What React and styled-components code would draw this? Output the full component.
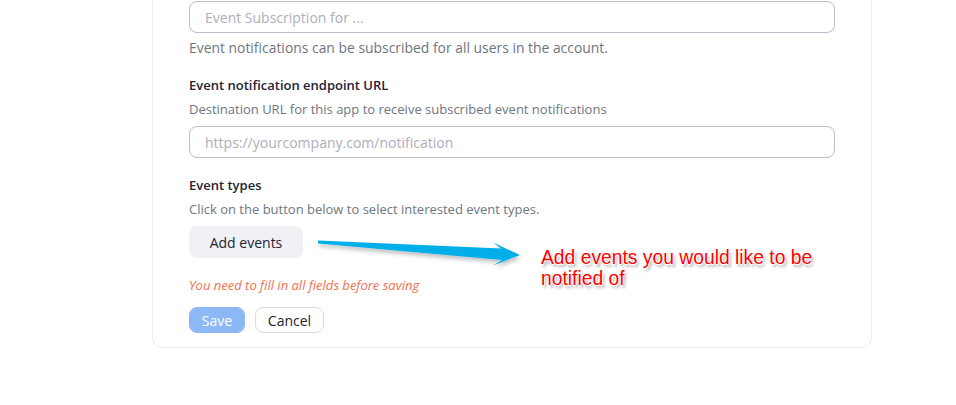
import React from 'react';
import styled, { createGlobalStyle } from 'styled-components';

const GlobalStyle = createGlobalStyle`
  html, body {
    margin: 0;
    padding: 0;
    background: #ffffff;
  }

  body {
    font-family: 'Open Sans', 'Noto Sans', sans-serif;
    color: #232333;
  }
`;

const Page = styled.div`
  position: relative;
  width: 956px;
  height: 405px;
  overflow: hidden;
`;

const Card = styled.section`
  margin-left: 152px;
  width: 720px;
  box-sizing: border-box;
  padding: 1px 36px 14px;
  border: 1px solid #ededf1;
  border-top: none;
  border-radius: 0 0 10px 10px;
  display: flex;
  flex-direction: column;
`;

const Field = styled.div`
  display: flex;
  flex-direction: column;
  margin-top: ${({ $gap }) => $gap || 0}px;
`;

const Label = styled.div`
  font-size: 13px;
  line-height: 20px;
  font-weight: 600;
  color: #232333;
`;

const Help = styled.div`
  font-size: ${({ $size }) => $size || 13}px;
  line-height: 20px;
  color: #6e7680;
  margin-top: ${({ $gap }) => $gap || 0}px;
`;

const TextInput = styled.input`
  box-sizing: border-box;
  width: 100%;
  height: 32px;
  margin-top: ${({ $gap }) => $gap || 0}px;
  padding: 0 15px;
  border: 1px solid #bcbacd;
  border-radius: 8px;
  font-family: 'Open Sans', 'Noto Sans', sans-serif;
  font-size: 14px;
  color: #232333;
  outline: none;

  &::placeholder {
    color: #aeaebb;
  }
`;

const GreyButton = styled.button`
  align-self: flex-start;
  box-sizing: border-box;
  width: 114px;
  height: 32px;
  margin-top: 7px;
  border: none;
  border-radius: 8px;
  background: #f1f1f5;
  font-family: 'Open Sans', 'Noto Sans', sans-serif;
  font-size: 14px;
  color: #232333;
`;

const ErrorText = styled.div`
  margin-top: 18px;
  font-size: 13px;
  line-height: 18px;
  font-style: italic;
  color: #f2704f;
`;

const Actions = styled.div`
  display: flex;
  gap: 10px;
  margin-top: 13px;
`;

const ActionButton = styled.button`
  box-sizing: border-box;
  height: 26px;
  width: ${({ $w }) => $w}px;
  padding: 0;
  border-radius: 8px;
  font-family: 'Open Sans', 'Noto Sans', sans-serif;
  font-size: 14px;
  border: 1px solid ${({ $primary }) => ($primary ? '#8cb9f6' : '#dadae2')};
  background: ${({ $primary }) => ($primary ? '#8cb9f6' : '#ffffff')};
  color: ${({ $primary }) => ($primary ? '#ffffff' : '#232333')};
`;

const Arrow = styled.svg`
  position: absolute;
  left: 0;
  top: 0;
  pointer-events: none;
`;

const Note = styled.div`
  position: absolute;
  left: 541px;
  top: 247px;
  font-family: 'Liberation Sans', Arial, sans-serif;
  font-size: 19.3px;
  line-height: 21px;
  color: #ff0000;
  text-shadow:
    -1px 0 0 #fff, 1px 0 0 #fff, 0 -1px 0 #fff, 0 1px 0 #fff,
    2px 3px 3px rgba(0, 0, 0, 0.35);
`;

export default function App() {
  return (
    <Page>
      <GlobalStyle />
      <Card>
        <Field>
          <TextInput placeholder="Event Subscription for ..." />
          <Help $gap={5} $size={13.9}>Event notifications can be subscribed for all users in the account.</Help>
        </Field>

        <Field $gap={17}>
          <Label>Event notification endpoint URL</Label>
          <Help $gap={4}>Destination URL for this app to receive subscribed event notifications</Help>
          <TextInput $gap={7} placeholder="https://yourcompany.com/notification" />
        </Field>

        <Field $gap={17}>
          <Label>Event types</Label>
          <Help $gap={4}>Click on the button below to select interested event types.</Help>
          <GreyButton>Add events</GreyButton>
        </Field>

        <ErrorText>You need to fill in all fields before saving</ErrorText>

        <Actions>
          <ActionButton $primary $w={56}>Save</ActionButton>
          <ActionButton $w={69}>Cancel</ActionButton>
        </Actions>
      </Card>

      <Arrow width="956" height="405" viewBox="0 0 956 405">
        <defs>
          <filter id="arrowShadow" x="-10%" y="-50%" width="120%" height="200%">
            <feDropShadow dx="1" dy="3" stdDeviation="2" floodColor="#000" floodOpacity="0.25" />
          </filter>
        </defs>
        <polygon
          points="318,240.5 501,248.5 493,242.5 520,255 493,265.5 502,260 318,243.5"
          fill="#00aeea"
          filter="url(#arrowShadow)"
        />
      </Arrow>

      <Note>
        Add events you would like to be
        <br />
        notified of
      </Note>
    </Page>
  );
}
